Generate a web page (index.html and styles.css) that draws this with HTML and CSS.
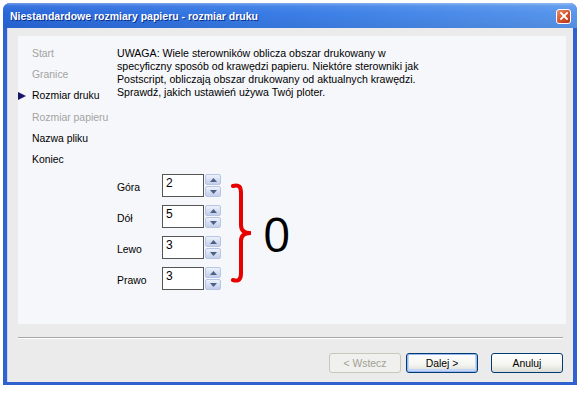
FILE: index.html
```html
<!DOCTYPE html>
<html lang="pl">
<head>
<meta charset="utf-8">
<title>Niestandardowe rozmiary papieru</title>
<link rel="stylesheet" href="styles.css">
</head>
<body>
<div class="window">
  <div class="titlebar">
    <span class="title">Niestandardowe rozmiary papieru - rozmiar druku</span>
    <span class="close"><svg width="8" height="8" viewBox="0 0 8 8"><path d="M1 1 L7 7 M7 1 L1 7" stroke="#fff" stroke-width="1.8" stroke-linecap="square"/></svg></span>
  </div>
  <div class="client">
    <div class="panel">
      <ul class="nav">
        <li class="dis">Start</li>
        <li class="dis">Granice</li>
        <li class="cur"><svg class="arrow" width="8" height="8" viewBox="0 0 8 8"><path d="M0 0 L8 4 L0 8 Z" fill="#16166b"/></svg>Rozmiar druku</li>
        <li class="dis">Rozmiar papieru</li>
        <li>Nazwa pliku</li>
        <li>Koniec</li>
      </ul>
      <div class="content">
        <p class="note">UWAGA: Wiele sterowników oblicza obszar drukowany w<br>specyficzny sposób od krawędzi papieru. Niektóre sterowniki jak<br>Postscript, obliczają obszar drukowany od aktualnych krawędzi.<br>Sprawdź, jakich ustawień używa Twój ploter.</p>
        <div class="margins">
          <div class="fields">
            <span class="lbl">Góra</span>
            <div class="spinner"><span class="val">2</span><span class="spin"><span class="sb"><svg width="7" height="4" viewBox="0 0 7 4"><path d="M0 4 L3.5 0 L7 4 Z" fill="#4d6185"/></svg></span><span class="sb"><svg width="7" height="4" viewBox="0 0 7 4"><path d="M0 0 L3.5 4 L7 0 Z" fill="#4d6185"/></svg></span></span></div>
            <span class="lbl">Dół</span>
            <div class="spinner"><span class="val">5</span><span class="spin"><span class="sb"><svg width="7" height="4" viewBox="0 0 7 4"><path d="M0 4 L3.5 0 L7 4 Z" fill="#4d6185"/></svg></span><span class="sb"><svg width="7" height="4" viewBox="0 0 7 4"><path d="M0 0 L3.5 4 L7 0 Z" fill="#4d6185"/></svg></span></span></div>
            <span class="lbl">Lewo</span>
            <div class="spinner"><span class="val">3</span><span class="spin"><span class="sb"><svg width="7" height="4" viewBox="0 0 7 4"><path d="M0 4 L3.5 0 L7 4 Z" fill="#4d6185"/></svg></span><span class="sb"><svg width="7" height="4" viewBox="0 0 7 4"><path d="M0 0 L3.5 4 L7 0 Z" fill="#4d6185"/></svg></span></span></div>
            <span class="lbl">Prawo</span>
            <div class="spinner"><span class="val">3</span><span class="spin"><span class="sb"><svg width="7" height="4" viewBox="0 0 7 4"><path d="M0 4 L3.5 0 L7 4 Z" fill="#4d6185"/></svg></span><span class="sb"><svg width="7" height="4" viewBox="0 0 7 4"><path d="M0 0 L3.5 4 L7 0 Z" fill="#4d6185"/></svg></span></span></div>
          </div>
          <svg class="brace" width="20" height="100" viewBox="0 0 20 100"><path d="M2 3 C8 1 10 4 10 10 L10 42 C10 47 13 50 19 50 C13 50 10 53 10 58 L10 90 C10 96 8 99 2 97" fill="none" stroke="#e60000" stroke-width="4" stroke-linecap="round" stroke-linejoin="round"/></svg>
          <span class="zero">0</span>
        </div>
      </div>
    </div>
    <div class="sep"></div>
    <div class="buttons">
      <span class="btn disabled">&lt; Wstecz</span>
      <span class="btn default">Dalej &gt;</span>
      <span class="btn cancel">Anuluj</span>
    </div>
  </div>
</div>
</body>
</html>
```

FILE: styles.css
```css
html, body {
  margin: 0;
  padding: 0;
  background: #ffffff;
}
body {
  width: 582px;
  height: 393px;
  overflow: hidden;
  font-family: "Liberation Sans", Arial, sans-serif;
  font-size: 10.4px;
  color: #000;
}
.window {
  margin: 3px 0 0 3px;
  width: 574px;
  height: 382px;
  display: flex;
  flex-direction: column;
  background: #2f62d0;
  border-radius: 7px 7px 0 0;
  box-sizing: border-box;
}
.titlebar {
  height: 25px;
  flex: none;
  display: flex;
  align-items: center;
  justify-content: space-between;
  padding: 0 6px 0 7px;
  border-radius: 7px 7px 0 0;
  background:
    linear-gradient(to bottom, rgba(255,255,255,0.35) 0, rgba(255,255,255,0.08) 3px, rgba(255,255,255,0) 40%, rgba(0,0,0,0.06) 100%),
    linear-gradient(to right, #2867da, #3a7de6 50%, #5896ec);
}
.title {
  color: #fff;
  font-weight: bold;
  font-size: 10.5px;
  text-shadow: 1px 1px 0 #0a2f8a;
  padding-top: 1px;
}
.close {
  width: 13px;
  height: 13px;
  border: 1px solid #fff;
  border-radius: 3px;
  background: linear-gradient(to bottom right, #e8906f, #d4502a 55%, #b83314);
  display: flex;
  align-items: center;
  justify-content: center;
  margin-top: 1px;
}
.client {
  flex: 1;
  margin: 0 4px 3px 4px;
  background: #ebebeb;
  padding: 8px 7px 0 10px;
  display: flex;
  flex-direction: column;
  border-left: 1px solid #c8d6f2;
}
.panel {
  height: 288px;
  flex: none;
  background: #f6f7fa;
  display: grid;
  grid-template-columns: 99px 1fr;
}
.nav {
  list-style: none;
  margin: 0;
  padding: 7px 0 0 0;
}
.nav li {
  line-height: 21.2px;
  padding-left: 14px;
  position: relative;
  white-space: nowrap;
}
.nav li.dis {
  color: #a3a3a3;
}
.nav .arrow {
  position: absolute;
  left: 0;
  top: 7px;
}
.content {
  padding-top: 11px;
}
.note {
  margin: 0;
  line-height: 13px;
  font-size: 10.6px;
  white-space: nowrap;
}
.margins {
  margin-top: 75px;
  display: flex;
  align-items: flex-start;
}
.fields {
  display: grid;
  grid-template-columns: 45px auto;
  row-gap: 8px;
  align-items: center;
}
.lbl {
  padding-top: 3px;
}
.spinner {
  display: flex;
  height: 23px;
  gap: 1px;
}
.val {
  border: 1px solid #555;
  background: #fff;
  padding: 2px 0 0 3px;
  box-sizing: border-box;
  width: 42px;
  height: 23px;
  line-height: 13px;
  font-size: 12px;
}
.spin {
  display: flex;
  flex-direction: column;
  justify-content: space-between;
  width: 16px;
}
.sb {
  height: 11px;
  box-sizing: border-box;
  border: 1px solid #b7c5e6;
  border-radius: 2px;
  background: linear-gradient(to bottom, #eef2fb, #d2dbf1 60%, #c3cee9);
  display: flex;
  align-items: center;
  justify-content: center;
}
.brace {
  margin-left: 10px;
  margin-top: 9px;
  flex: none;
}
.zero {
  margin-left: 12px;
  margin-top: 34px;
  font-family: "Open Sans", "Liberation Sans", sans-serif;
  font-size: 48px;
  line-height: 52px;
}
.sep {
  margin-top: 13px;
  margin-right: 3px;
  height: 1px;
  background: #a7a7a7;
  border-bottom: 1px solid #fff;
}
.buttons {
  display: flex;
  justify-content: flex-end;
  margin-top: 14px;
  margin-right: 3px;
}
.btn {
  width: 72px;
  height: 20px;
  box-sizing: border-box;
  border-radius: 3px;
  display: flex;
  align-items: center;
  justify-content: center;
  border: 1px solid #003c74;
  background: linear-gradient(to bottom, #ffffff, #f4f4f0 60%, #dcdcd6);
  color: #000;
}
.btn.disabled {
  border-color: #c9c7ba;
  color: #a1a192;
  background: #f0f0ee;
}
.btn.default {
  margin-left: 5px;
  box-shadow: inset 0 0 0 1px #9ab8f0, inset 0 -1px 0 2px #c5d6f7;
}
.btn.cancel {
  margin-left: 13px;
}
```
